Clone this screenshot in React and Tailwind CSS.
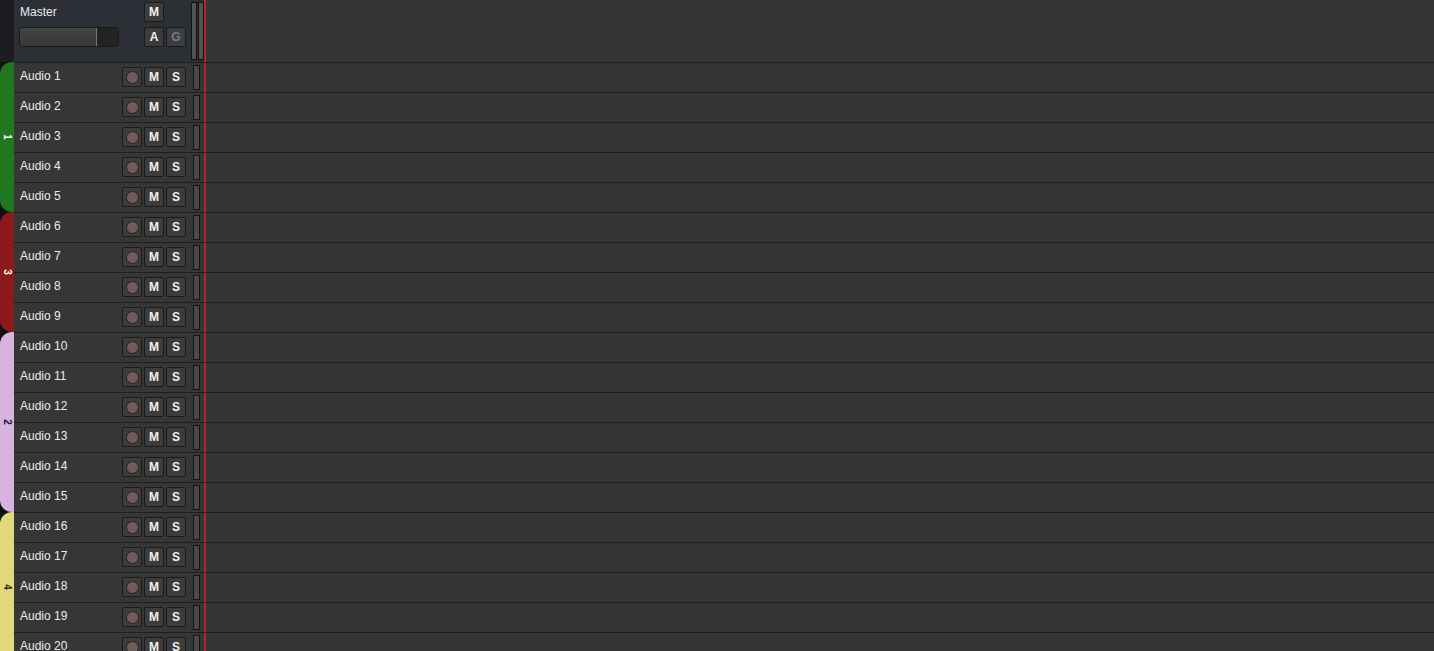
import React from "react";

const groups = [
  { label: "1", bg: "bg-[#1f771f]", text: "text-white", tracks: [1, 2, 3, 4, 5] },
  { label: "3", bg: "bg-[#8a1a1c]", text: "text-white", tracks: [6, 7, 8, 9] },
  { label: "2", bg: "bg-[#d7b3e0]", text: "text-[#222]", tracks: [10, 11, 12, 13, 14, 15] },
  { label: "4", bg: "bg-[#e1d77b]", text: "text-[#222]", tracks: [16, 17, 18, 19, 20] },
];

function Btn({ children, dim }) {
  return (
    <div
      className={
        "w-[20px] h-[20px] flex items-center justify-center rounded-[2px] border border-[#1a1a1a] text-[12px] font-bold leading-none " +
        (dim ? "bg-[#3a3d44] text-[#7a7a7a]" : "bg-[#3c3c3c] text-[#f0f0f0]")
      }
    >
      {children}
    </div>
  );
}

function RecBtn() {
  return (
    <div className="w-[20px] h-[20px] flex items-center justify-center rounded-[2px] border border-[#1a1a1a] bg-[#3c3c3c]">
      <div className="w-[13px] h-[13px] rounded-full bg-[#705a5a] border border-[#2a2222]" />
    </div>
  );
}

function TrackRow({ n }) {
  return (
    <div className="flex h-[30px] shrink-0 border-t border-[#1e1e1e]">
      <div className="w-[176px] flex items-center bg-[#363636]">
        <div className="pl-[6px] w-[108px] text-[12px] text-[#ececec] -mt-[3px]">Audio {n}</div>
        <div className="flex gap-[2px] -mt-[1px]">
          <RecBtn />
          <Btn>M</Btn>
          <Btn>S</Btn>
        </div>
      </div>
      <div className="w-[14px] flex items-center justify-start bg-[#363636] pl-[3px]">
        <div className="w-[7px] h-[25px] border border-[#141414] bg-[#4a4a4a]" />
      </div>
      <div className="w-[2px] bg-[#b0282b]" />
      <div className="flex-1 bg-[#343434]" />
    </div>
  );
}

export default function App() {
  return (
    <div
      className="w-[1434px] h-[651px] overflow-hidden bg-[#111] flex flex-col"
      style={{ fontFamily: '"Liberation Sans", Arial, sans-serif' }}
    >
      <div className="flex h-[62px] shrink-0">
        <div className="w-[14px] bg-[#1c1d20]" />
        <div className="w-[176px] bg-[#2c2f36] relative">
          <div className="absolute left-[6px] top-[3px] text-[12px] text-[#ececec]">Master</div>
          <div className="absolute left-[5px] top-[27px] w-[100px] h-[20px] rounded-[3px] border border-[#1a1a1a] bg-gradient-to-b from-[#444] to-[#383838] flex overflow-hidden">
            <div className="w-[77px] border-r border-[#777]" />
            <div className="flex-1 bg-[#232323]" />
          </div>
          <div className="absolute left-[130px] top-[2px]">
            <Btn>M</Btn>
          </div>
          <div className="absolute left-[130px] top-[27px] flex gap-[2px]">
            <Btn>A</Btn>
            <Btn dim>G</Btn>
          </div>
        </div>
        <div className="w-[14px] bg-[#2c2f36] flex gap-[1px] pl-[1px] py-[2px]">
          <div className="w-[6px] h-full border border-[#111] bg-[#525252]" />
          <div className="w-[6px] h-full border border-[#111] bg-[#525252]" />
        </div>
        <div className="w-[2px] bg-[#b0282b]" />
        <div className="flex-1 bg-[#343434]" />
      </div>
      <div className="flex flex-1 min-h-0">
        <div className="w-[14px] shrink-0 flex flex-col bg-[#111]">
          {groups.map((g) => (
            <div
              key={g.label}
              className={
                "shrink-0 rounded-l-[12px] flex items-center justify-center " + g.bg
              }
              style={{ height: g.tracks.length * 30 }}
            >
              <span className={"rotate-90 text-[10px] font-bold leading-none " + g.text}>{g.label}</span>
            </div>
          ))}
        </div>
        <div className="flex-1 flex flex-col">
          {groups.flatMap((g) => g.tracks).map((n) => (
            <TrackRow key={n} n={n} />
          ))}
        </div>
      </div>
    </div>
  );
}
